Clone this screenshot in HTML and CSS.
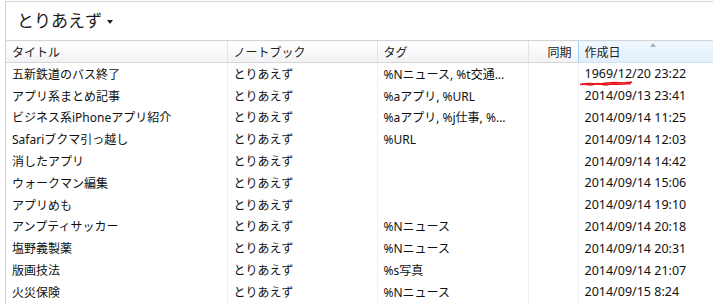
FILE: index.html
```html
<!DOCTYPE html>
<html lang="ja">
<head>
    <meta charset="UTF-8">
    <title>とりあえず</title>
    <link rel="stylesheet" href="styles.css">
</head>
<body>
    <div class="pane">
        <div class="notebook-title">とりあえず<span class="caret"></span></div>
        <table class="notes">
            <colgroup>
                <col class="col-title">
                <col class="col-book">
                <col class="col-tag">
                <col class="col-sync">
                <col class="col-date">
            </colgroup>
            <thead>
                <tr>
                    <th>タイトル</th>
                    <th>ノートブック</th>
                    <th>タグ</th>
                    <th class="right">同期</th>
                    <th class="sorted">作成日<span class="sort-arrow"></span></th>
                </tr>
            </thead>
            <tbody>
                <tr><td>五新鉄道のバス終了</td><td>とりあえず</td><td>%Nニュース, %t交通...</td><td></td><td class="date first">1969/12/20 23:22
                    <svg class="scribble" width="60" height="8" viewBox="0 0 60 8">
                        <polyline points="1,5.5 9,4.5 20,5 28,4 36,3.5 45,4 53,3" fill="none" stroke="#e8141c" stroke-width="1.5"/>
                        <polyline points="3,5 12,6 19,4.5 26,6 33,5 41,5.2 52,4.5" fill="none" stroke="#e8141c" stroke-width="1.4"/>
                        <polyline points="14,5 24,4.5 30,5.5 38,4.5" fill="none" stroke="#e8141c" stroke-width="1.2"/>
                    </svg>
                </td></tr>
                <tr><td>アプリ系まとめ記事</td><td>とりあえず</td><td>%aアプリ, %URL</td><td></td><td class="date">2014/09/13 23:41</td></tr>
                <tr><td>ビジネス系iPhoneアプリ紹介</td><td>とりあえず</td><td>%aアプリ, %j仕事, %...</td><td></td><td class="date">2014/09/14 11:25</td></tr>
                <tr><td>Safariブクマ引っ越し</td><td>とりあえず</td><td>%URL</td><td></td><td class="date">2014/09/14 12:03</td></tr>
                <tr><td>消したアプリ</td><td>とりあえず</td><td></td><td></td><td class="date">2014/09/14 14:42</td></tr>
                <tr><td>ウォークマン編集</td><td>とりあえず</td><td></td><td></td><td class="date">2014/09/14 15:06</td></tr>
                <tr><td>アプリめも</td><td>とりあえず</td><td></td><td></td><td class="date">2014/09/14 19:10</td></tr>
                <tr><td>アンプティサッカー</td><td>とりあえず</td><td>%Nニュース</td><td></td><td class="date">2014/09/14 20:18</td></tr>
                <tr><td>塩野義製薬</td><td>とりあえず</td><td>%Nニュース</td><td></td><td class="date">2014/09/14 20:31</td></tr>
                <tr><td>版画技法</td><td>とりあえず</td><td>%s写真</td><td></td><td class="date">2014/09/14 21:07</td></tr>
                <tr><td>火災保険</td><td>とりあえず</td><td>%Nニュース</td><td></td><td class="date">2014/09/15 8:24</td></tr>
            </tbody>
        </table>
    </div>
</body>
</html>
```

FILE: styles.css
```css
body {
    margin: 0;
    background: #fff;
    font-family: "Noto Sans", "Noto Sans CJK JP", sans-serif;
    color: #111;
    overflow: hidden;
}
.pane {
    margin: 1px 0 0 5px;
    border-top: 1px solid #d4d4d4;
    border-left: 1px solid #d4d4d4;
    height: 302px;
    overflow: hidden;
}
.notebook-title {
    height: 38px;
    line-height: 38px;
    padding-left: 11px;
    font-size: 17px;
    color: #1a1a1a;
}
.caret {
    display: inline-block;
    margin-left: 5px;
    vertical-align: middle;
    border-left: 3.5px solid transparent;
    border-right: 3.5px solid transparent;
    border-top: 4px solid #222;
}
.notes {
    border-collapse: collapse;
    table-layout: fixed;
    width: 712px;
    font-size: 12px;
}
.col-title { width: 221px; }
.col-book { width: 150px; }
.col-tag { width: 151px; }
.col-sync { width: 50px; }
.col-date { width: 140px; }
th {
    height: 21px;
    padding: 0 6px;
    font-weight: normal;
    text-align: left;
    color: #222;
    background: linear-gradient(#ffffff, #f1f2f4);
    border-top: 1px solid #d5d5d5;
    border-bottom: 1px solid #d5d5d5;
    border-left: 1px solid #e2e3e5;
}
th:first-child {
    border-left: none;
}
th.right {
    text-align: right;
}
th.sorted {
    position: relative;
    background: linear-gradient(#f3f9fe, #dfeefa);
    border-left: 1px solid #a2d0f0;
    border-bottom-color: #cfe3f2;
}
.sort-arrow {
    position: absolute;
    top: 2px;
    left: 71px;
    border-left: 3.5px solid transparent;
    border-right: 3.5px solid transparent;
    border-bottom: 4px solid #9fb4c8;
}
td {
    height: 21.8px;
    padding: 0 6px;
    white-space: nowrap;
    overflow: hidden;
    border-left: 1px solid #edf1f6;
}
td:first-child {
    border-left: none;
}
td.date {
    padding-left: 6px;
    font-size: 12.5px;
}
td.first {
    position: relative;
    overflow: visible;
}
.scribble {
    position: absolute;
    left: 0;
    top: 16px;
}
```
